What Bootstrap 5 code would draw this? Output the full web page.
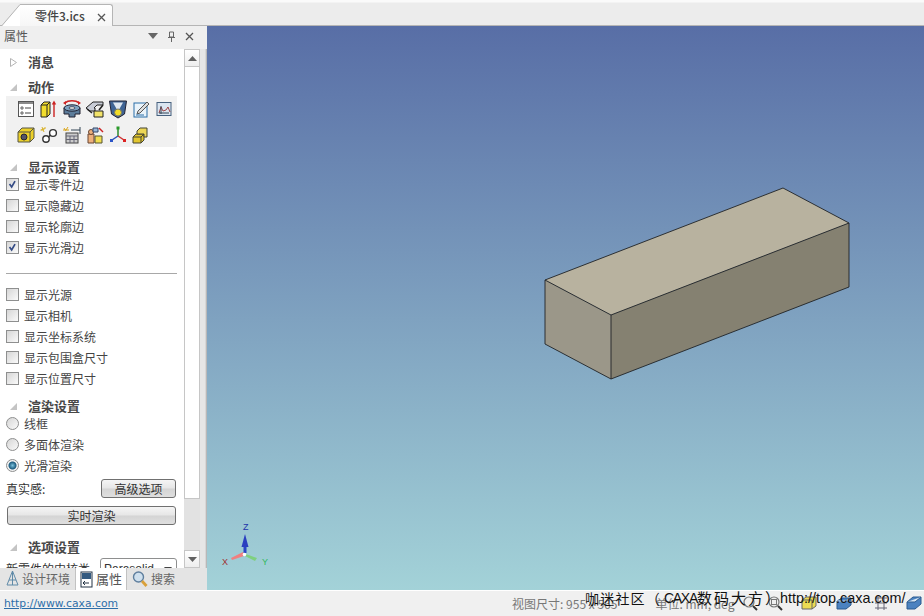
<!DOCTYPE html>
<html lang="zh-CN">
<head>
    <meta charset="UTF-8">
    <meta name="viewport" content="width=device-width, initial-scale=1.0">
    <title>零件3.ics</title>
    <link href="https://cdn.jsdelivr.net/npm/bootstrap@5.3.0/dist/css/bootstrap.min.css" rel="stylesheet">
    <style>
        html, body { height: 100%; overflow: hidden; }
        body {
            font-family: "Noto Sans CJK SC", "Liberation Sans", sans-serif;
            font-size: 12px;
            line-height: 16px;
            color: #333;
            background: #f0f0f0;
        }
        .app { width: 924px; height: 616px; position: relative; overflow: hidden; }

        /* document tab strip */
        .tabstrip { height: 26px; background: linear-gradient(#fafafa 0, #fafafa 2px, #ececec 3px); border-bottom: 1px solid #b5b5b5; padding-top: 4px; padding-left: 2px; }
        .doctab { height: 22px; margin-bottom: -1px; }
        .doctab-body { width: 93px; background: linear-gradient(#fff, #f6f6f6); border: 1px solid #b5b5b5; border-left: 0; border-bottom: 0; border-radius: 0 3px 0 0; padding-left: 15px; font-weight: 500; font-size: 12px; color: #444; }
        .doctab-close { margin-left: 12px; color: #555; }

        /* left panel */
        .mainrow { height: 564px; }
        .sidepanel { width: 207px; background: #e4e4e4; }
        .panel-head { height: 23px; background: #efefef; padding: 0 13px 3px 4px; color: #555; font-size: 12px; }
        .panel-tools { gap: 9px; }
        .panel-main { height: 519px; }
        .panel-body { width: 184px; height: 519px; background: #fff; overflow: hidden; padding-left: 6px; }
        .vscroll { width: 16px; height: 519px; background: #e2e2e2; }
        .vs-btn { height: 18px; background: linear-gradient(#fff, #eee); border: 1px solid #c6c6c6; }
        .vs-thumb { height: 432px; background: #fff; border: 1px solid #c6c6c6; border-top: 0; }
        .vs-space { height: 51px; }
        .gutter { width: 7px; background: linear-gradient(90deg, #e6e6e6, #e6e6e6 5px, #a9a9a9); height: 519px; }
        .sect { height: 16px; padding-bottom: 1px; font-weight: 700; font-size: 13px; color: #484848; }
        .sect-arrow { width: 22px; padding-left: 4px; flex: none; }
        .opt-row { height: 21px; color: #444; }
        .opt-row .form-check-input {
            width: 13px; height: 13px; margin: 0 5px 0 0; flex: none;
            border: 1px solid #8e8f8f; border-radius: 0;
            background-color: #eee;
            background-image: linear-gradient(135deg, #d6d6d6, #fafafa);
        }
        .opt-row .form-check-input[type=checkbox]:checked {
            background-color: #eee;
            background-image: url("data:image/svg+xml,%3Csvg xmlns='http://www.w3.org/2000/svg' viewBox='0 0 13 13'%3E%3Cpath d='M3 6l2.5 3.5L9.5 2.5' fill='none' stroke='%23344b85' stroke-width='2'/%3E%3C/svg%3E"), linear-gradient(135deg, #d6d6d6, #fafafa);
            background-size: 100% 100%;
            border-color: #8e8f8f;
        }
        .opt-row .form-check-input[type=radio] { border-radius: 50%; }
        .opt-row .form-check-input[type=radio]:checked {
            border-color: #8e8f8f;
            background-image: radial-gradient(circle, #7cc3de 0, #1d5c80 3.5px, #f2f2f2 4.5px);
            background-color: #f2f2f2;
        }
        .toolbox { width: 171px; height: 51px; background: #f1f1f1; margin: 1px 0 12px 0; padding: 0 0 0 10px; }
        .tool-row { height: 26px; gap: 3px; }
        .tool-row svg { width: 20px; height: 20px; flex: none; }
        .sep-line { width: 171px; height: 1px; background: #a8a8a8; margin: 15px 0 10px; }
        .winbtn {
            font-size: 12px; line-height: 16px; padding: 0; height: 19px; color: #333;
            background: linear-gradient(#f5f5f5, #e6e6e6 48%, #d4d4d4 52%, #dfdfdf);
            border: 1px solid #707070; border-radius: 3px;
        }
        .btn-adv { width: 75px; margin-left: auto; margin-right: 8px; }
        .btn-real { width: 169px; margin-left: 1px; margin-top: 8px; }
        .combo { width: 77px; height: 22px; margin-left: 10px; padding-left: 3px; border: 1px solid #8e8f8f; border-radius: 3px; background: #fff; font-family: "Liberation Sans", sans-serif; flex: none; }
        .combo svg { margin-right: 4px; }
        .panel-tabs { height: 22px; background: #e4e4e4; padding-left: 5px; color: #666; white-space: nowrap; }
        .ptab { height: 22px; padding: 0 5px 0 1px; flex: none; }
        .ptab svg { flex: none; margin-right: 3px; }
        .ptab-on { background: #fff; border: 1px solid #c2c2c2; border-top: 0; color: #555; font-size: 13px; margin: 0 4px 0 0; padding: 0 0 0 4px; height: 23px; width: 52px; }

        /* 3D view */
        .viewport { width: 717px; height: 564px; background: linear-gradient(#586ea6, #a3d2d8); }
        .viewport svg { display: block; }

        /* status bar */
        .statusbar { height: 26px; background: #f0f0f0; border-top: 1px solid #fff; padding-left: 4px; color: #777; position: relative; }
        .status-link { font-family: "DejaVu Sans", sans-serif; font-size: 10.8px; color: #2d6ea8; text-decoration: underline; margin-top: 5px; }
        .status-size { margin-left: 394px; margin-top: 5px; }
        .status-unit { margin-left: 38px; margin-top: 5px; }
        .status-icons { position: absolute; left: 741px; top: 3px; }
        .status-icons svg { flex: none; }
        .watermark { position: absolute; left: 585px; top: 588px; color: #111; line-height: 20px; white-space: nowrap; display: flex; }
        .wm-a { font-size: 14px; letter-spacing: 1.2px; width: 79px; }
        .wm-caxa { font-family: "Liberation Sans", sans-serif; font-size: 14px; letter-spacing: -1.3px; width: 33px; }
        .wm-b { font-size: 15px; letter-spacing: 2px; width: 83px; }
        .wm-url { font-family: "Liberation Sans", sans-serif; font-size: 14.4px; }
    </style>
</head>
<body>
<div class="app">
    <div class="tabstrip d-flex">
        <div class="doctab d-flex">
            <svg width="18" height="22" viewBox="0 0 18 22"><path d="M0 22 L18 1 V22 Z" fill="#fff"/><path d="M0 21.5 L18 0.5" stroke="#b5b5b5" fill="none"/></svg>
            <div class="doctab-body d-flex align-items-center">零件3.ics<span class="doctab-close"><svg width="9" height="9" viewBox="0 0 9 9"><path d="M1 1l7 7M8 1l-7 7" stroke="#555" stroke-width="1.3"/></svg></span></div>
        </div>
    </div>

    <div class="mainrow d-flex">
        <div class="sidepanel">
            <div class="panel-head d-flex align-items-center justify-content-between">
                <span>属性</span>
                <div class="panel-tools d-flex align-items-center">
                    <svg width="10" height="6" viewBox="0 0 10 6"><path d="M0 0h10L5 6z" fill="#666"/></svg>
                    <svg width="9" height="11" viewBox="0 0 9 11"><path d="M2.5 1h4v5h-4zM1 6.5h7M4.5 7v4" stroke="#666" fill="none"/></svg>
                    <svg width="9" height="9" viewBox="0 0 9 9"><path d="M1 1l7 7M8 1l-7 7" stroke="#555" stroke-width="1.3"/></svg>
                </div>
            </div>
            <div class="panel-main d-flex">
                <div class="panel-body">
                    <div class="sect d-flex align-items-center" style="margin-top:5px"><span class="sect-arrow"><svg width="7" height="9" viewBox="0 0 7 9"><path d="M.5.5l6 4-6 4z" fill="#fff" stroke="#b5b5b5"/></svg></span>消息</div>
                    <div class="sect d-flex align-items-center" style="margin-top:9px"><span class="sect-arrow"><svg width="7" height="7" viewBox="0 0 7 7"><path d="M7 0v7H0z" fill="#c4c4c4"/></svg></span>动作</div>

                    <div class="toolbox">
                        <div class="tool-row d-flex align-items-center">
                            <svg viewBox="0 0 20 20"><rect x="2.5" y="2.500" width="15" height="15" fill="#fff" stroke="#555"/><path d="M3 3h14v2H3z" fill="#8a8a8a"/><path d="M5 8h2v2H5zM5 13h2v2H5z" fill="none" stroke="#444" stroke-width=".8"/><path d="M9 9h6M9 14h6" stroke="#444"/></svg>
                            <svg viewBox="0 0 20 20"><path d="M2 6l3-3h6v12l-3 3H2z" fill="#f2dd2d" stroke="#222"/><path d="M2 6h6v12M8 6l3-3" fill="none" stroke="#222"/><path d="M15 18V5" stroke="#c22" stroke-width="1.4"/><path d="M15 1.500l2.200 4h-4.400z" fill="#c22"/></svg>
                            <svg viewBox="0 0 20 20"><path d="M3 4c3-3 11-3 14 0" fill="none" stroke="#c22" stroke-width="1.500"/><path d="M1 4l3-2v4zM19 4l-3-2v4z" fill="#c22"/><path d="M2 9v6h5v3h6v-3h5V9z" fill="#5d7d9b" stroke="#223"/><ellipse cx="10" cy="9" rx="8" ry="3.200" fill="#7ea2c0" stroke="#223"/><ellipse cx="10" cy="9" rx="3" ry="1.300" fill="#eee" stroke="#223" stroke-width=".7"/></svg>
                            <svg viewBox="0 0 20 20"><path d="M1 9l7-6h10v3h-6l-3 3h1v3H5z" fill="#c8ccd6" stroke="#222"/><path d="M18 6l-4 5" stroke="#222" stroke-width="1.600"/><path d="M9 12h9v6H9z" fill="#f2e36a" stroke="#222"/><path d="M2 10l5 4" stroke="#222" stroke-width="1.400"/></svg>
                            <svg viewBox="0 0 20 20"><path d="M1.500 2h17l-2 13-6.500 4-6.500-4z" fill="#3f6495" stroke="#223"/><path d="M5 3.500l5 9 5-9z" fill="#dfe7f0"/><circle cx="10" cy="13.500" r="3.500" fill="#f1dc27" stroke="#776"/></svg>
                            <svg viewBox="0 0 20 20"><rect x="3" y="4" width="13" height="14" fill="#eaf3fa" stroke="#2b6ea8"/><path d="M6 15l1-3 9-9 2 2-9 9z" fill="#ddd" stroke="#555"/><path d="M5 16h8" stroke="#2b6ea8"/></svg>
                            <svg viewBox="0 0 20 20"><rect x="3" y="3.500" width="14" height="13" fill="#dbe5f0" stroke="#47617e"/><path d="M5 14l2-6 2 4 3-1 2-3 2 5" fill="none" stroke="#933" stroke-width=".9"/><path d="M7 7v8M5 14h10" stroke="#345"/></svg>
                        </div>
                        <div class="tool-row d-flex align-items-center">
                            <svg viewBox="0 0 20 20"><path d="M2 7l4-4h12v10l-4 4H2z" fill="#ecd12a" stroke="#554"/><path d="M2 7h12v10M14 7l4-4" fill="none" stroke="#554"/><circle cx="8" cy="12" r="3" fill="#556" stroke="#223"/></svg>
                            <svg viewBox="0 0 20 20"><circle cx="14" cy="8" r="3.400" fill="#fff" stroke="#333" stroke-width="1.400"/><circle cx="7" cy="14" r="3.200" fill="#fff" stroke="#333" stroke-width="1.400"/><path d="M9.500 12l2-2" stroke="#333" stroke-width="1.600"/><path d="M3 2l2 5M1.500 5l5-1.500M6.500 2l-4 4" stroke="#d9b22a"/></svg>
                            <svg viewBox="0 0 20 20"><path d="M2 3l2 3M6 2L4 5M1 5h6" stroke="#d9a418"/><rect x="4" y="8" width="12" height="10" fill="#ccc" stroke="#444"/><path d="M4 11h12M8 11v7M12 11v7M4 14.500h12" stroke="#667"/><path d="M9 5h9M18 2v7" stroke="#345"/></svg>
                            <svg viewBox="0 0 20 20"><path d="M3 9h6v9H3z" fill="#eeb07c" stroke="#643"/><circle cx="6" cy="7" r="2.500" fill="#eeb07c" stroke="#643"/><path d="M10 11h7v7h-7z" fill="#f1dd50" stroke="#553"/><path d="M8 3h5v4H8z" fill="#9ab8d8" stroke="#346"/><path d="M14 3l4 4" stroke="#c22" stroke-width="1.400"/></svg>
                            <svg viewBox="0 0 20 20"><path d="M10 11V3" stroke="#2a8a2a" stroke-width="1.500"/><path d="M10 11l-6 4" stroke="#2b55b8" stroke-width="1.500"/><path d="M10 11l6 4" stroke="#c33" stroke-width="1.500"/><rect x="8.500" y="1.500" width="3" height="3" fill="#2a9a2a"/><rect x="2" y="14" width="3" height="3" fill="#2b55c8"/><rect x="15" y="14" width="3" height="3" fill="#d22"/></svg>
                            <svg viewBox="0 0 20 20"><path d="M2 12l3-3h8v6l-3 3H2z" fill="#e2c630" stroke="#443"/><path d="M2 12h8v6M10 12l3-3" fill="none" stroke="#443"/><path d="M6 6l3-3h7v9h-3V9H6z" fill="#ecd656" stroke="#443"/></svg>
                        </div>
                    </div>

                    <div class="sect d-flex align-items-center"><span class="sect-arrow"><svg width="7" height="7" viewBox="0 0 7 7"><path d="M7 0v7H0z" fill="#c4c4c4"/></svg></span>显示设置</div>
                    <div class="opt-row d-flex align-items-center" style="margin-top:-1px"><input class="form-check-input" type="checkbox" checked>显示零件边</div>
                    <div class="opt-row d-flex align-items-center"><input class="form-check-input" type="checkbox">显示隐藏边</div>
                    <div class="opt-row d-flex align-items-center"><input class="form-check-input" type="checkbox">显示轮廓边</div>
                    <div class="opt-row d-flex align-items-center"><input class="form-check-input" type="checkbox" checked>显示光滑边</div>
                    <div class="sep-line"></div>
                    <div class="opt-row d-flex align-items-center"><input class="form-check-input" type="checkbox">显示光源</div>
                    <div class="opt-row d-flex align-items-center"><input class="form-check-input" type="checkbox">显示相机</div>
                    <div class="opt-row d-flex align-items-center"><input class="form-check-input" type="checkbox">显示坐标系统</div>
                    <div class="opt-row d-flex align-items-center"><input class="form-check-input" type="checkbox">显示包围盒尺寸</div>
                    <div class="opt-row d-flex align-items-center"><input class="form-check-input" type="checkbox">显示位置尺寸</div>

                    <div class="sect d-flex align-items-center" style="margin-top:9px"><span class="sect-arrow"><svg width="7" height="7" viewBox="0 0 7 7"><path d="M7 0v7H0z" fill="#c4c4c4"/></svg></span>渲染设置</div>
                    <div class="opt-row d-flex align-items-center" style="margin-top:-1px"><input class="form-check-input" type="radio" name="rm">线框</div>
                    <div class="opt-row d-flex align-items-center"><input class="form-check-input" type="radio" name="rm">多面体渲染</div>
                    <div class="opt-row d-flex align-items-center"><input class="form-check-input" type="radio" name="rm" checked>光滑渲染</div>
                    <div class="d-flex align-items-center" style="margin-top:3px">真实感:<button class="btn winbtn btn-adv">高级选项</button></div>
                    <button class="btn winbtn btn-real d-block">实时渲染</button>
                    <div class="sect d-flex align-items-center" style="margin-top:14px"><span class="sect-arrow"><svg width="7" height="7" viewBox="0 0 7 7"><path d="M7 0v7H0z" fill="#c4c4c4"/></svg></span>选项设置</div>
                    <div class="d-flex align-items-center" style="margin-top:3px">新零件的内核类<div class="combo d-flex align-items-center justify-content-between">Parasolid<svg width="8" height="5" viewBox="0 0 8 5"><path d="M0 0h8L4 5z" fill="#444"/></svg></div></div>
                </div>
                <div class="vscroll">
                    <div class="vs-btn d-flex align-items-center justify-content-center"><svg width="9" height="5" viewBox="0 0 9 5"><path d="M4.500 0L9 5H0z" fill="#606060"/></svg></div>
                    <div class="vs-thumb"></div>
                    <div class="vs-space"></div>
                    <div class="vs-btn d-flex align-items-center justify-content-center"><svg width="9" height="5" viewBox="0 0 9 5"><path d="M4.500 5L9 0H0z" fill="#606060"/></svg></div>
                </div>
                <div class="gutter"></div>
            </div>
            <div class="panel-tabs d-flex align-items-start">
                <div class="ptab d-flex align-items-center"><svg width="13" height="18" viewBox="0 0 13 18"><path d="M6.500 1L1 15M6.500 1l5.500 14M6.500 1v14" stroke="#5f8aa8" fill="none"/><path d="M1 15h11M3 10h7" stroke="#5f8aa8"/></svg>设计环境</div>
                <div class="ptab ptab-on d-flex align-items-center"><svg width="13" height="17" viewBox="0 0 13 17"><rect x="1" y="1" width="11" height="15" fill="#fff" stroke="#234"/><rect x="2" y="2" width="9" height="6" fill="#345a80"/><path d="M3 12h6M5 10l-2 2 2 2" stroke="#234" fill="none"/></svg>属性</div>
                <div class="ptab d-flex align-items-center"><svg width="16" height="18" viewBox="0 0 16 18"><circle cx="6.500" cy="7" r="5" fill="#cfe0ee" stroke="#5f7f9e" stroke-width="1.400"/><path d="M10 11l4.500 5" stroke="#d9a03a" stroke-width="2.800"/></svg>搜索</div>
            </div>
        </div>

        <div class="viewport">
            <svg width="717" height="564" viewBox="207 26 717 564">
                <polygon points="545,280 783,188 849,223 611,315" fill="#b8b29f"/>
                <polygon points="545,280 611,315 611,379 545,344" fill="#9b9789"/>
                <polygon points="611,315 849,223 849,287 611,379" fill="#858171"/>
                <path d="M545 280L783 188L849 223V287L611 379L545 344ZM545 280L611 315L849 223M611 315V379" fill="none" stroke="#1f2226" stroke-width=".9"/>
                <path d="M243.500 553V544h3V553z" fill="#2a45c5"/>
                <path d="M245 534l3.500 13h-7z" fill="#2a3fc0"/>
                <path d="M243 552l-12 6 1 2 12-4z" fill="#f08080"/>
                <path d="M246 554l11 4-2 3-10-5z" fill="#7fd07f"/>
                <circle cx="244.500" cy="554.500" r="1.800" fill="#fff"/>
                <text x="243" y="530" font-family="Liberation Sans" font-size="9" fill="#2233aa">Z</text>
                <text x="222" y="565" font-family="Liberation Sans" font-size="9" fill="#a03030">X</text>
                <text x="262" y="565" font-family="Liberation Sans" font-size="9" fill="#30b860">Y</text>
            </svg>
        </div>
    </div>

    <div class="statusbar d-flex">
        <a class="status-link" href="#">http://www.caxa.com</a>
        <span class="status-size">视图尺寸: 955 x 565</span>
        <span class="status-unit">单位: mm, deg</span>
        <div class="status-icons d-flex align-items-center">
            <svg width="18" height="18" viewBox="0 0 18 18"><circle cx="8" cy="8" r="5" fill="#eee" stroke="#777" stroke-width="1.200"/><path d="M12 12l4 4" stroke="#333" stroke-width="2"/></svg>
            <svg width="18" height="18" viewBox="0 0 18 18" style="margin-left:7px"><circle cx="8" cy="8" r="5" fill="#eee" stroke="#777" stroke-width="1.200"/><rect x="5.500" y="5.500" width="5" height="5" fill="none" stroke="#777"/><path d="M12 12l4 4" stroke="#333" stroke-width="2"/></svg>
            <svg width="18" height="18" viewBox="0 0 18 18" style="margin-left:16px"><path d="M2 6l4-3h10v9l-4 3H2z" fill="#ecdb52" stroke="#666"/><path d="M2 6h10v9" fill="none" stroke="#666"/></svg>
            <svg width="18" height="18" viewBox="0 0 18 18" style="margin-left:17px"><path d="M2 7l5-3h9v7l-5 4H2z" fill="#4b82c0" stroke="#2b5b90"/><path d="M2 7h9l5-3" fill="none" stroke="#cde"/></svg>
            <svg width="18" height="18" viewBox="0 0 18 18" style="margin-left:19px"><path d="M3 4h12M3 9h12M3 14h12M6 2v14M12 2v14" stroke="#667"/></svg>
            <svg width="18" height="18" viewBox="0 0 18 18" style="margin-left:15px"><path d="M2 8l6-5h8v7l-6 5H2z" fill="#4b82c0" stroke="#2b5b90"/><path d="M2 8h8l6-5" fill="#d8e6f2" stroke="#2b5b90"/></svg>
        </div>
    </div>

    <div class="watermark"><span class="wm-a">咖迷社区（</span><span class="wm-caxa">CAXA</span><span class="wm-b">数码大方）</span><span class="wm-url">http://top.caxa.com/</span></div>
</div>
<script src="https://cdn.jsdelivr.net/npm/bootstrap@5.3.0/dist/js/bootstrap.bundle.min.js"></script>
</body>
</html>
